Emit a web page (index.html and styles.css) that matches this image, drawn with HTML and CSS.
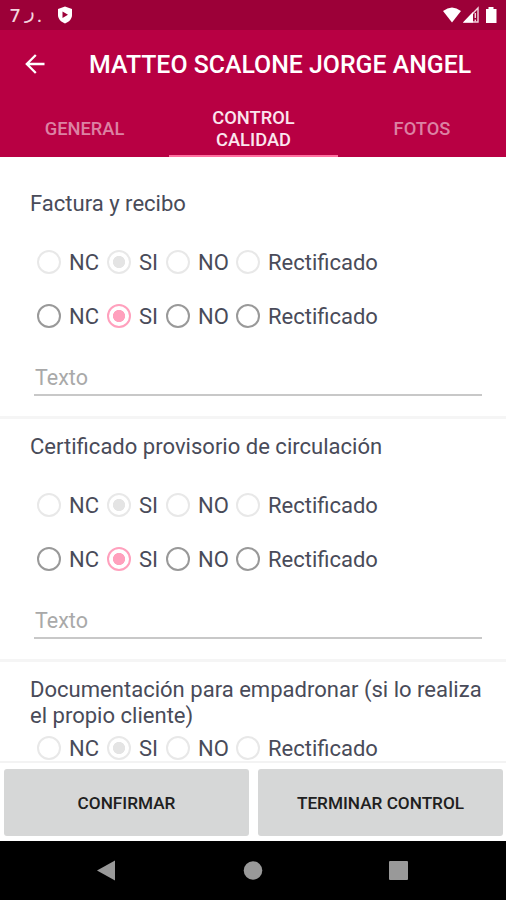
FILE: index.html
```html
<!DOCTYPE html>
<html lang="es">
<head>
<meta charset="utf-8">
<title>Control calidad</title>
<link rel="stylesheet" href="styles.css">
</head>
<body>
<div class="status">
  <div class="status-text"><span>7</span><span class="letter">ر</span><span>.</span></div>
  <svg class="shield" width="16" height="18" viewBox="0 0 16 18"><path d="M8 .5 15 3v6c0 4-3 7-7 8.500C4 16 1 13 1 9V3z" fill="#fff"/><path d="M5.500 5.500v6.500l5.500-3.200z" fill="#9c0038"/></svg>
  <svg class="signals" width="56" height="18" viewBox="0 0 56 18"><path d="M1 5Q10-2 19 5L10 16.500z" fill="#fff"/><path d="M22.500 16 36 2v14z" fill="none" stroke="#f3d5df" stroke-width="1.400"/><path d="M21 16.500 31 6v10.500z" fill="#fff"/><path d="M33.300 7v5M33.300 13.500v2" stroke="#f3d5df" stroke-width="1.400"/><path d="M46.500 1h5v2h3v14H44V3h2.500z" fill="#fff"/></svg>
</div>
<header class="appbar">
  <svg class="back" width="20" height="20" viewBox="0 0 20 20" fill="none" stroke="#fff" stroke-width="2.300"><path d="M19.500 10H1.800M10.800 1 1.800 10l9 9"/></svg>
  <h1 class="name">MATTEO SCALONE JORGE ANGEL</h1>
</header>
<nav class="tabs">
  <div class="tab">GENERAL</div>
  <div class="tab active">CONTROL<br>CALIDAD</div>
  <div class="tab">FOTOS</div>
</nav>
<main class="list">
  <section class="item">
    <h2 class="title">Factura y recibo</h2>
    <div class="row disabled"><label class="opt">NC</label><label class="opt on">SI</label><label class="opt">NO</label><label class="opt">Rectificado</label></div>
    <div class="row"><label class="opt">NC</label><label class="opt on">SI</label><label class="opt">NO</label><label class="opt">Rectificado</label></div>
    <div class="field">Texto</div>
  </section>
  <section class="item">
    <h2 class="title">Certificado provisorio de circulación</h2>
    <div class="row disabled"><label class="opt">NC</label><label class="opt on">SI</label><label class="opt">NO</label><label class="opt">Rectificado</label></div>
    <div class="row"><label class="opt">NC</label><label class="opt on">SI</label><label class="opt">NO</label><label class="opt">Rectificado</label></div>
    <div class="field">Texto</div>
  </section>
  <section class="item">
    <h2 class="title">Documentación para empadronar (si lo realiza<br>el propio cliente)</h2>
    <div class="row disabled"><label class="opt">NC</label><label class="opt on">SI</label><label class="opt">NO</label><label class="opt">Rectificado</label></div>
  </section>
</main>
<div class="actions">
  <button class="btn">CONFIRMAR</button>
  <button class="btn">TERMINAR CONTROL</button>
</div>
<footer class="navbar">
  <svg width="19" height="22" viewBox="0 0 19 22"><path d="M0 10.500 18 .5v20z" fill="#999"/></svg>
  <svg width="20" height="20" viewBox="0 0 20 20"><circle cx="10" cy="9.500" r="9.300" fill="#999"/></svg>
  <svg width="20" height="20" viewBox="0 0 20 20"><rect x="0" y="0" width="19" height="19" rx="1" fill="#999"/></svg>
</footer>
</body>
</html>
```
FILE: styles.css
```css
*, *::before { box-sizing: border-box; }
body {
  margin: 0;
  width: 506px;
  height: 900px;
  overflow: hidden;
  display: flex;
  flex-direction: column;
  background: #fff;
  font-family: Roboto, "DejaVu Sans", sans-serif;
}
.status {
  height: 30px;
  flex: none;
  display: flex;
  align-items: center;
  padding: 0 8px 0 10px;
  background: #9c0038;
  color: #f3d5df;
}
.status-text {
  width: 47px;
  display: grid;
  grid-template-columns: 15px 12px 10px;
  font-size: 18px;
  font-weight: 500;
  line-height: 32px;
  height: 30px;
}
.letter { font-family: "DejaVu Sans", sans-serif; font-size: 20px; line-height: 22px; }
.signals { margin-left: auto; }
.appbar {
  height: 70px;
  flex: none;
  display: flex;
  align-items: center;
  padding-left: 25px;
  background: #b80043;
  color: #fff;
}
.back { margin-top: -2px; }
.name { margin: 0 0 0 44px; font-size: 24.85px; line-height: 30px; font-weight: 500; white-space: nowrap; }
.tabs {
  height: 57px;
  flex: none;
  display: grid;
  grid-template-columns: 169px 169px 168px;
  background: #b80043;
}
.tab {
  display: flex;
  align-items: center;
  justify-content: center;
  text-align: center;
  font-size: 18.3px;
  line-height: 22px;
  font-weight: 500;
  color: #dc82a3;
  border-bottom: 2px solid transparent;
  padding-top: 3px;
}
.tab.active { color: #fbe6ee; border-bottom-color: #ff6f9f; }
.list { height: 606px; flex: none; overflow: hidden; padding-top: 19px; border-bottom: 2px solid #f3f3f3; }
.item { height: 243px; padding: 15px 24px 0 30px; border-bottom: 3px solid #f5f5f5; }
.title {
  height: 44px;
  margin: 0;
  font-size: 22.05px;
  line-height: 26px;
  font-weight: 400;
  color: #494b59;
  white-space: nowrap;
}
.row { height: 54px; display: grid; grid-template-columns: 70px 59px 70px 150px; padding-left: 7px; }
.opt {
  display: flex;
  align-items: center;
  gap: 8px;
  font-size: 22px;
  color: #494b59;
  white-space: nowrap;
}
.opt::before {
  content: "";
  flex: none;
  width: 24px;
  height: 24px;
  border: 2px solid #999;
  border-radius: 50%;
}
.opt.on::before { border-color: #ffa0bd; background: radial-gradient(circle, #ffa0bd 5.700px, transparent 6.500px); }
.disabled .opt::before { border-color: #e8e8e8; }
.disabled .opt.on::before { background: radial-gradient(circle, #e4e4e4 5.700px, transparent 6.500px); }
.field {
  height: 53px;
  margin-left: 4px;
  padding: 21px 0 0 1px;
  border-bottom: 2px solid #c8c8c8;
  font-size: 21.5px;
  line-height: 28px;
  color: #a9a9a9;
}
.actions {
  height: 78px;
  flex: none;
  display: grid;
  grid-template-columns: 245px 245px;
  gap: 9px;
  padding: 6px 4px;
}
.btn {
  height: 67px;
  border: 0;
  border-radius: 3px;
  padding: 0;
  background: #d6d7d7;
  color: #202020;
  font: 500 17.2px Roboto, sans-serif;
}
.navbar {
  height: 59px;
  flex: none;
  display: flex;
  align-items: center;
  justify-content: space-between;
  padding: 0 97px;
  background: #000;
}
```
